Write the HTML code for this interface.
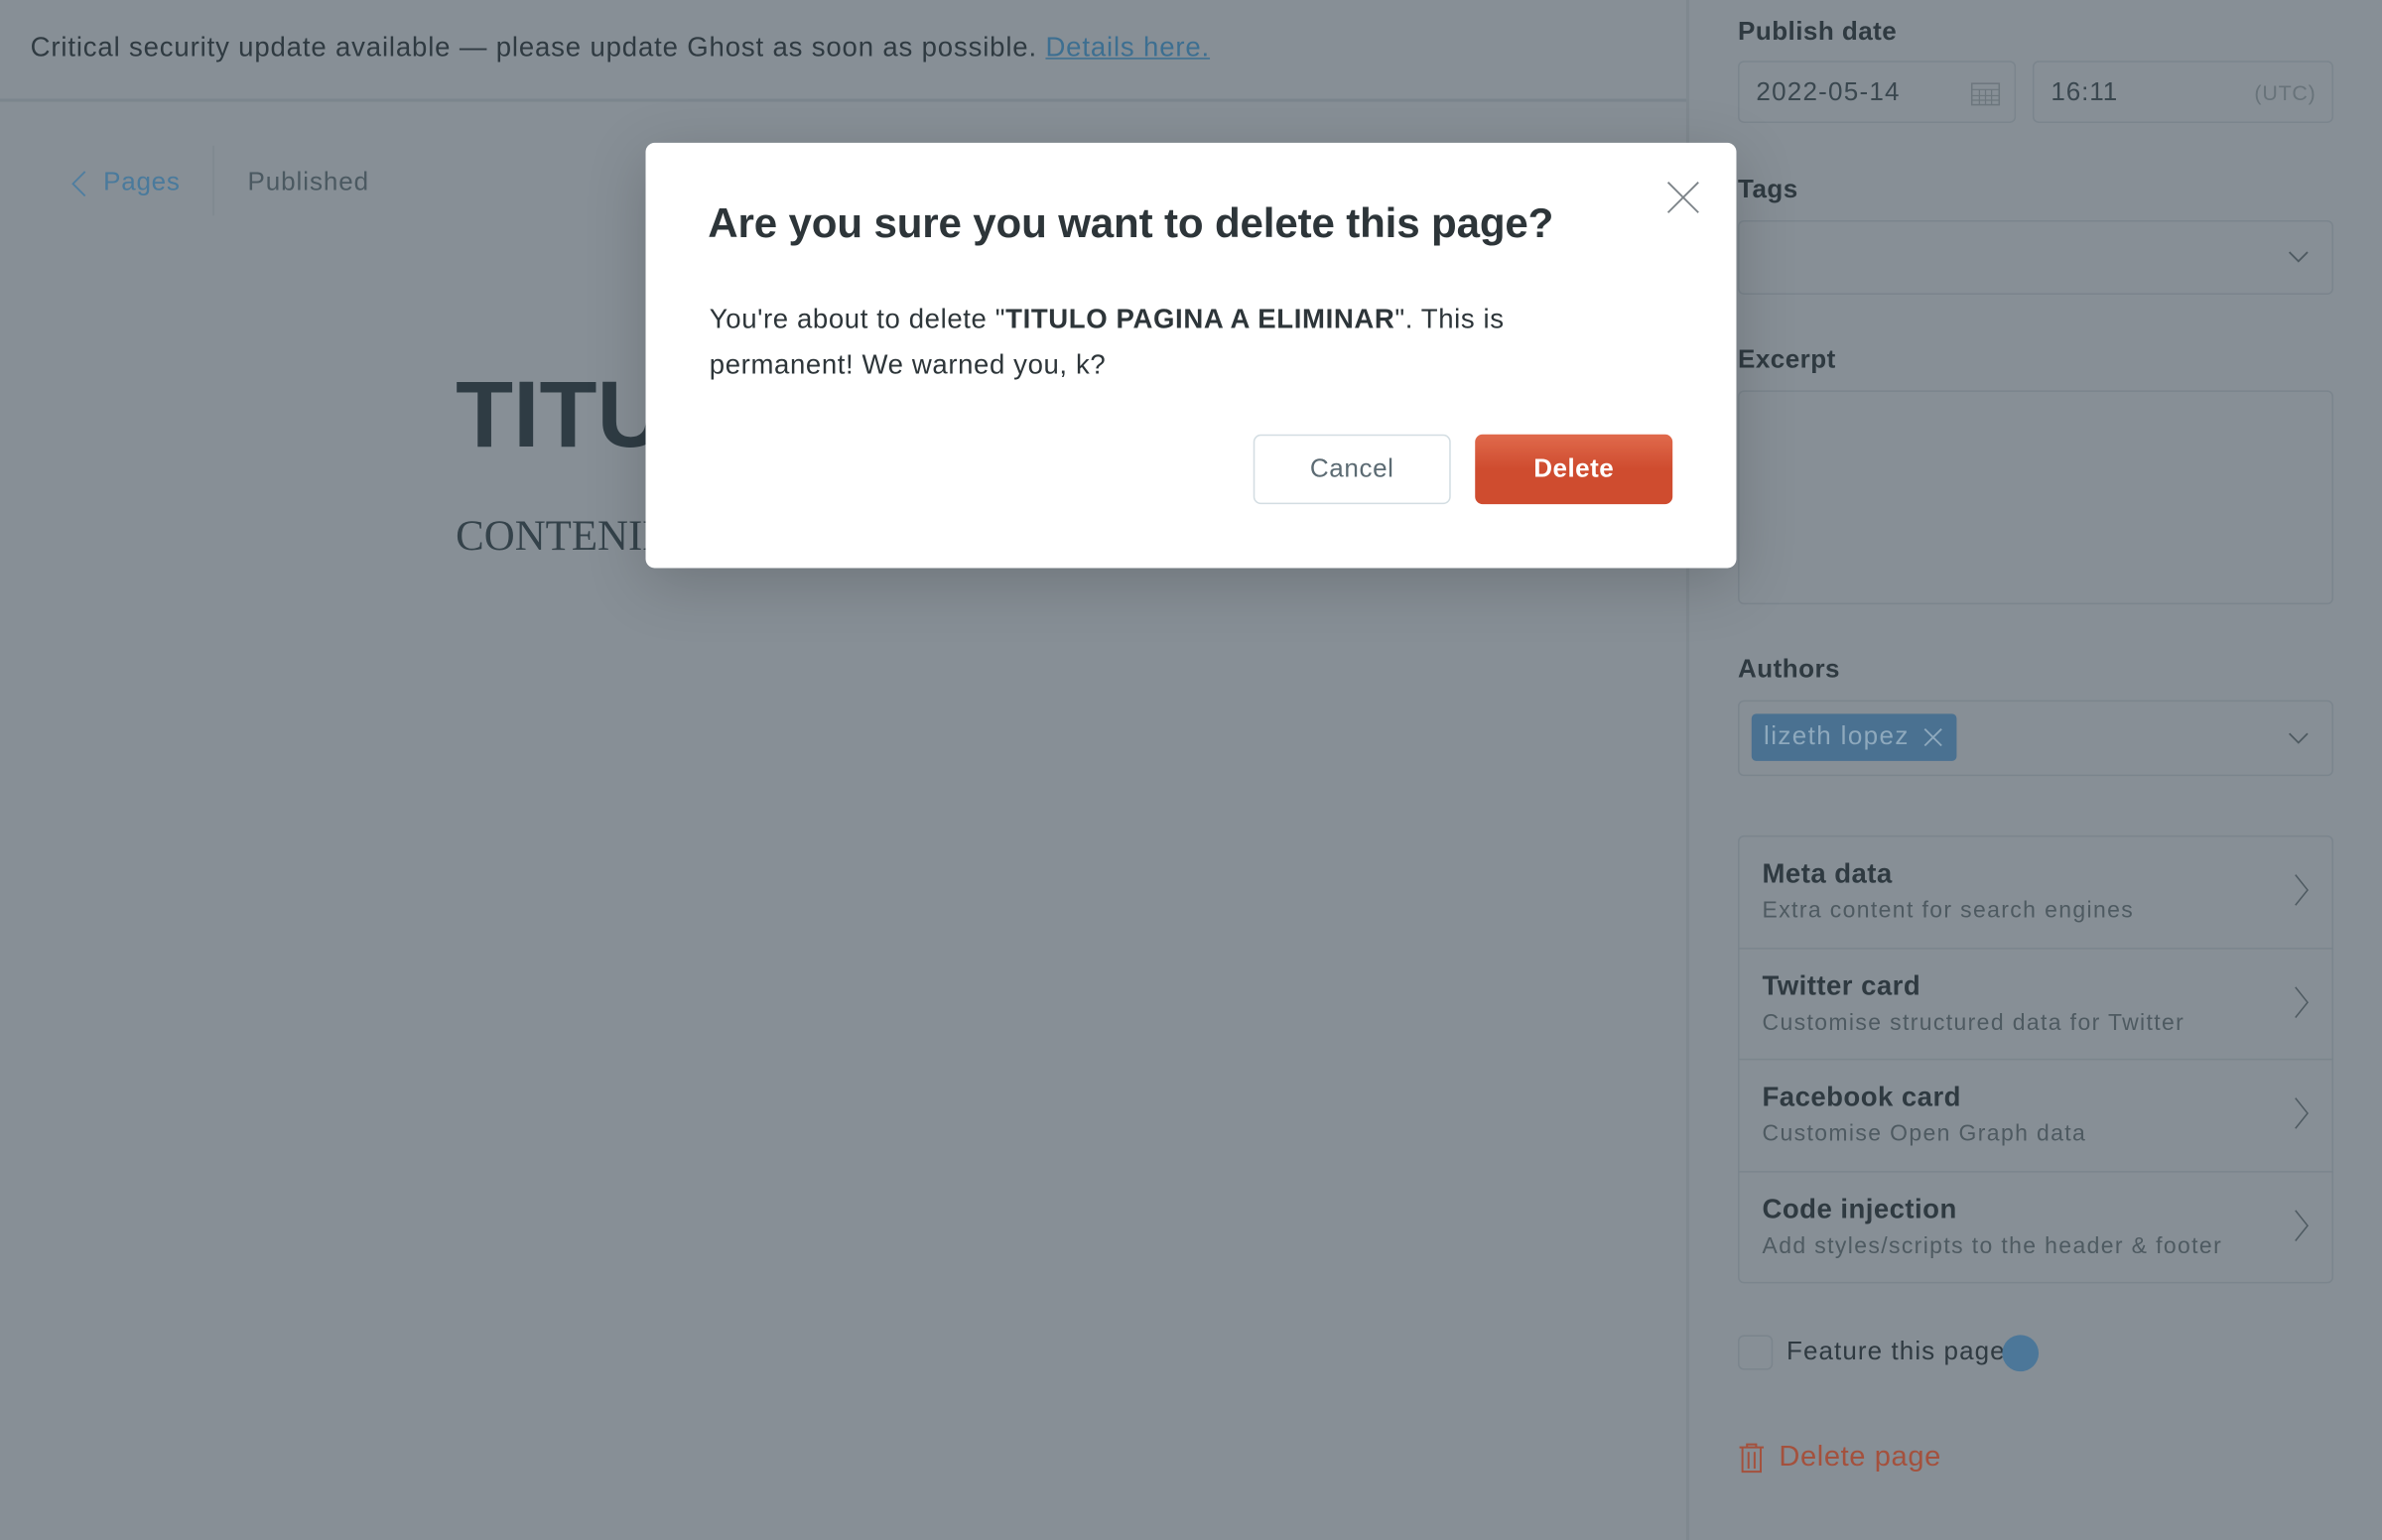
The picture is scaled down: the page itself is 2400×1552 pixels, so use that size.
<!DOCTYPE html>
<html><head><meta charset="utf-8"><style>
*{box-sizing:border-box;margin:0;padding:0}
html,body{width:2400px;height:1552px;overflow:hidden;background:#878f96}
#w{position:absolute;left:0;top:0;width:1568px;height:1014px;transform:scale(1.530612);transform-origin:0 0;font-family:"Liberation Sans",sans-serif;color:#2f3a41;background:#878f96}
.a{position:absolute;white-space:nowrap}
.box{position:absolute;border:1.5px solid #7b858d;border-radius:4px}
.lbl{position:absolute;font-size:17px;font-weight:bold;color:#2f3a41;letter-spacing:.3px}
.row{position:absolute;left:1144px;width:392px;height:73px;border-top:1.5px solid #7b858d}
.row b{position:absolute;left:16px;top:14px;font-size:18px;color:#2f3a41;letter-spacing:.3px}
.row span{position:absolute;left:16px;top:40px;font-size:15px;color:#4e5a61;letter-spacing:.9px}
.row svg{position:absolute;right:16px;top:24px}
</style></head><body><div id="w">
<div class="a" style="left:20px;top:21px;font-size:18px;color:#2f3a41;letter-spacing:.55px">Critical security update available — please update Ghost as soon as possible. <span style="color:#3d6f91;text-decoration:underline">Details here.</span></div>
<div class="a" style="left:0;top:65px;width:1110px;height:1.5px;background:#7b858d"></div>
<div class="a" style="left:1110px;top:0;width:1.5px;height:1014px;background:#7f888f"></div>
<svg class="a" style="left:46px;top:112px" width="12" height="18"><path d="M10 1 L2 9 L10 17" fill="none" stroke="#4f7ea0" stroke-width="1.2"/></svg>
<div class="a" style="left:68px;top:110px;font-size:17px;color:#4a7a9c;letter-spacing:.5px">Pages</div>
<div class="a" style="left:140px;top:96px;width:1px;height:46px;background:#7f888f"></div>
<div class="a" style="left:163px;top:110px;font-size:17px;color:#4b5961;letter-spacing:.6px">Published</div>
<div class="a" style="left:300px;top:238px;font-size:62px;font-weight:bold;color:#2f3c44">TITULO</div>
<div class="a" style="left:300px;top:338px;font-size:28px;font-family:'Liberation Serif',serif;color:#34424a">CONTENIDO</div>

<div class="lbl" style="left:1144px;top:11px">Publish date</div>
<div class="box" style="left:1144px;top:40px;width:183px;height:41px"></div>
<div class="a" style="left:1156px;top:51px;font-size:17px;color:#3a474f;letter-spacing:.8px">2022-05-14</div>
<svg class="a" style="left:1297px;top:52px" width="20" height="18"><rect x="1" y="3" width="18" height="14" fill="none" stroke="#6d777e"/><path d="M1 7h18M1 11h18M1 14h18M6 7v10M10 7v10M14 7v10" stroke="#6d777e" stroke-width=".8"/></svg>
<div class="box" style="left:1338px;top:40px;width:198px;height:41px"></div>
<div class="a" style="left:1350px;top:51px;font-size:17px;color:#3a474f;letter-spacing:.6px">16:11</div>
<div class="a" style="left:1484px;top:53px;font-size:14px;color:#68737a;letter-spacing:.5px">(UTC)</div>

<div class="lbl" style="left:1144px;top:115px">Tags</div>
<div class="box" style="left:1144px;top:145px;width:392px;height:49px"></div>
<svg class="a" style="left:1506px;top:165px" width="14" height="9"><path d="M1 1 L7 7 L13 1" fill="none" stroke="#4e5a61" stroke-width="1.2"/></svg>
<div class="lbl" style="left:1144px;top:227px">Excerpt</div>
<div class="box" style="left:1144px;top:257px;width:392px;height:141px"></div>
<div class="lbl" style="left:1144px;top:431px">Authors</div>
<div class="box" style="left:1144px;top:461px;width:392px;height:50px"></div>
<div class="a" style="left:1153px;top:470px;width:135px;height:31px;background:#4a7191;border-radius:3px"></div>
<div class="a" style="left:1161px;top:475px;font-size:17px;color:#8ea9bd;letter-spacing:.9px">lizeth lopez</div>
<svg class="a" style="left:1266px;top:479px" width="13" height="13"><path d="M1 1L12 12M12 1L1 12" stroke="#8ea9bd" stroke-width="1.2"/></svg>
<svg class="a" style="left:1506px;top:482px" width="14" height="9"><path d="M1 1 L7 7 L13 1" fill="none" stroke="#4e5a61" stroke-width="1.2"/></svg>

<div class="box" style="left:1144px;top:550px;width:392px;height:295px"></div>
<div class="row" style="top:551px;border-top:none"><b>Meta data</b><span>Extra content for search engines</span><svg width="10" height="22"><path d="M1 1L9 11L1 21" fill="none" stroke="#4e5a61"/></svg></div>
<div class="row" style="top:624px"><b>Twitter card</b><span>Customise structured data for Twitter</span><svg width="10" height="22"><path d="M1 1L9 11L1 21" fill="none" stroke="#4e5a61"/></svg></div>
<div class="row" style="top:697px"><b>Facebook card</b><span>Customise Open Graph data</span><svg width="10" height="22"><path d="M1 1L9 11L1 21" fill="none" stroke="#4e5a61"/></svg></div>
<div class="row" style="top:771px"><b>Code injection</b><span>Add styles/scripts to the header &amp; footer</span><svg width="10" height="22"><path d="M1 1L9 11L1 21" fill="none" stroke="#4e5a61"/></svg></div>

<div class="box" style="left:1144px;top:879px;width:23px;height:23px"></div>
<div class="a" style="left:1176px;top:880px;font-size:17px;color:#2f3a41;letter-spacing:.7px">Feature this page</div>
<div class="a" style="left:1318px;top:879px;width:24px;height:24px;border-radius:50%;background:#4c7799"></div>
<svg class="a" style="left:1144px;top:950px" width="18" height="20"><path d="M1 3h16M6 3V1h6v2M3 3v16h12V3M7 6v11M11 6v11" fill="none" stroke="#a4513d" stroke-width="1.3"/></svg>
<div class="a" style="left:1171px;top:949px;font-size:19px;color:#a4513d;letter-spacing:.4px">Delete page</div>

<div class="a" style="left:425px;top:94px;width:718px;height:280px;background:#fff;border-radius:6px;box-shadow:0 10px 40px rgba(0,0,0,.18)"></div>
<svg class="a" style="left:1097px;top:119px" width="22" height="22"><path d="M1 1L21 21M21 1L1 21" stroke="#7c8388" stroke-width="1.2"/></svg>
<div class="a" style="left:466px;top:131px;font-size:27.5px;font-weight:bold;color:#2d3539;letter-spacing:-.1px">Are you sure you want to delete this page?</div>
<div class="a" style="left:467px;top:195px;font-size:18px;line-height:30px;color:#2d3539;white-space:normal;width:550px;letter-spacing:.4px">You're about to delete "<b>TITULO PAGINA A ELIMINAR</b>". This is permanent! We warned you, k?</div>
<div class="a" style="left:825px;top:286px;width:130px;height:46px;border:1.5px solid #d3dde2;border-radius:5px;background:#fff;text-align:center;line-height:43px;font-size:17px;color:#5c6b73;letter-spacing:.4px">Cancel</div>
<div class="a" style="left:971px;top:286px;width:130px;height:46px;border-radius:5px;background:linear-gradient(#e06a4c,#cf4c2f 50%);text-align:center;line-height:46px;font-size:17px;font-weight:bold;color:#fff;letter-spacing:.3px">Delete</div>
</div></body></html>
